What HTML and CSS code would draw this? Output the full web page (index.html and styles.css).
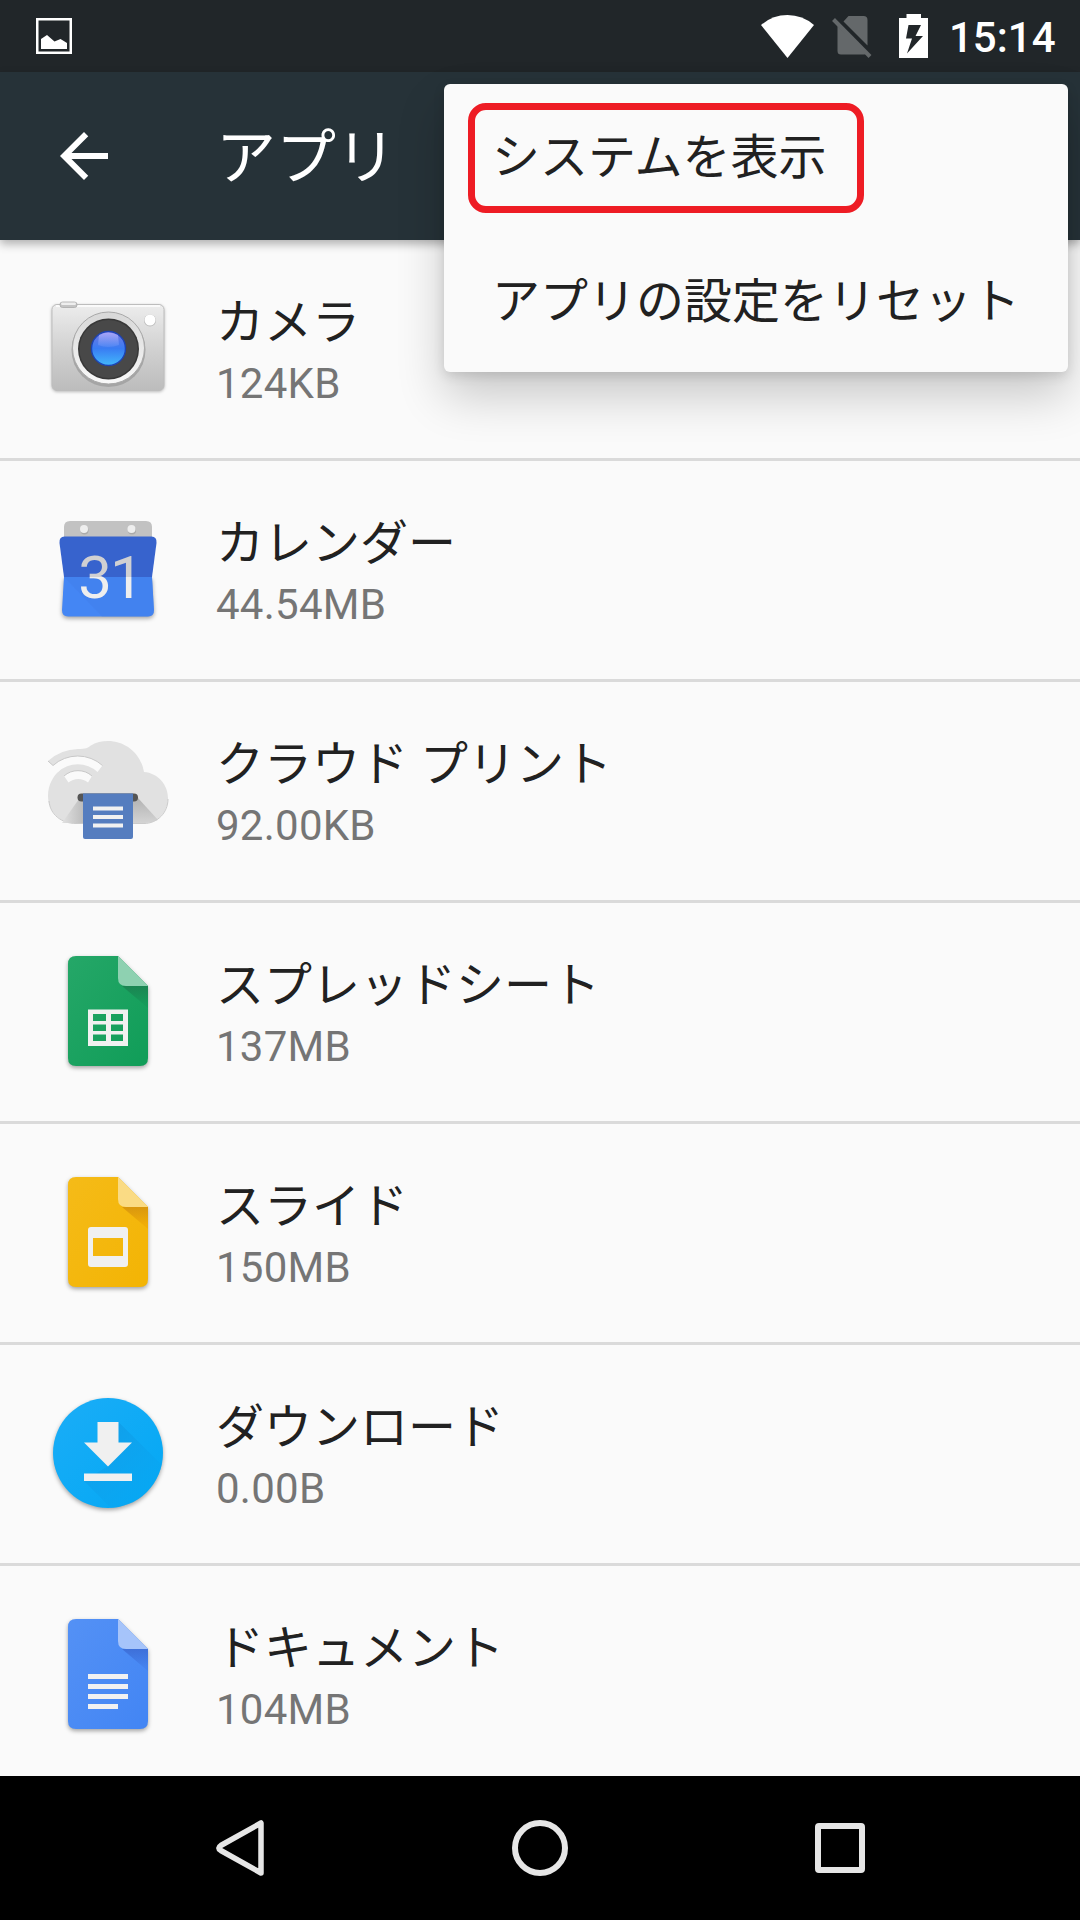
FILE: index.html
```html
<!DOCTYPE html>
<html lang="ja">
<head>
<meta charset="utf-8">
<title>アプリ</title>
<link rel="stylesheet" href="styles.css">
</head>
<body>
<div class="screen">
  <header class="status-bar">
    <svg class="status-picture" viewBox="0 0 36 36" width="36" height="36">
      <rect x="1.25" y="1.25" width="33.5" height="33.5" fill="none" stroke="#fff" stroke-width="2.5"/>
      <path d="M5 31V21L11 17L18.5 23.5L24.5 21L31 25V31Z" fill="#fff"/>
    </svg>
    <div class="status-right">
      <svg class="wifi" viewBox="0 0 53 43" width="53" height="43"><path d="M0 10Q11.500 0 26.500 0T53 10L26.500 43Z" fill="#fff"/></svg>
      <svg class="sim" viewBox="0 0 40 42" width="40" height="42">
        <path d="M11.500 5.500L16.500 0H31.500Q35.500 0 35.500 4V29.500Z M5.500 10V35Q5.500 38.500 9 38.500H32Q33.500 38.500 34.500 37.500Z" fill="#64686a"/>
        <path d="M1.500 3.500L38 40.500" stroke="#64686a" stroke-width="4"/>
      </svg>
      <svg class="battery" viewBox="0 0 29 44" width="29" height="44"><path fill="#fff" fill-rule="evenodd" d="M0 4H7.500V0H22V4H29V44H0ZM9.500 11L7 24.500H13L8 39.500L24 22H16.500L22 11Z"/></svg>
      <span class="clock">15:14</span>
    </div>
  </header>

  <div class="app-bar">
    <svg class="back" viewBox="0 0 24 24" width="72" height="72"><path fill="#fff" d="M20 11H7.830l5.590-5.590L12 4l-8 8 8 8 1.410-1.410L7.830 13H20v-2z"/></svg>
    <h1 class="title">アプリ</h1>
  </div>

  <main class="app-list">
    <div class="app-row">
      <svg class="app-icon" viewBox="0 0 120 120" width="120" height="120">
        <defs>
          <linearGradient id="camBody" x1="0" y1="0" x2="0" y2="1"><stop offset="0" stop-color="#ededed"/><stop offset=".5" stop-color="#d2d2d2"/><stop offset="1" stop-color="#bcbcbc"/></linearGradient>
          <linearGradient id="camRing" x1="0" y1="0" x2="0" y2="1"><stop offset="0" stop-color="#d8d8d8"/><stop offset="1" stop-color="#f8f8f8"/></linearGradient>
          <linearGradient id="camLens" x1="0" y1="0" x2="0" y2="1"><stop offset="0" stop-color="#7778e0"/><stop offset=".5" stop-color="#397cf3"/><stop offset="1" stop-color="#43b8fb"/></linearGradient>
          <linearGradient id="camShine" x1="0" y1="0" x2="0" y2="1"><stop offset="0" stop-color="#b9b3ff" stop-opacity=".75"/><stop offset="1" stop-color="#8ab0ff" stop-opacity=".2"/></linearGradient>
        </defs>
        <rect class="soft-light" x="4" y="15.500" width="112" height="86" rx="5" fill="url(#camBody)" stroke="#bdbdbd" stroke-width="1"/>
        <path d="M8 17H112" stroke="#fff" stroke-width="1.500"/>
        <rect x="12" y="13" width="17" height="5.500" rx="2.500" fill="#c4c4c4" stroke="#aaa" stroke-width=".8"/>
        <rect x="13" y="13.500" width="15" height="2.500" rx="1.200" fill="#eee"/>
        <circle cx="60.500" cy="61" r="37" fill="#a5a5a5"/>
        <circle cx="60.500" cy="59" r="36" fill="url(#camRing)" stroke="#a9a9a9" stroke-width="1"/>
        <circle cx="60.500" cy="59.500" r="33.500" fill="url(#camRing)"/>
        <circle cx="60.500" cy="60" r="30.500" fill="#383838"/>
        <circle cx="60.500" cy="60" r="29" fill="#484848"/>
        <circle cx="60.500" cy="59.500" r="17" fill="url(#camLens)" stroke="#1d43b2" stroke-width="1.400"/>
        <path d="M51 46Q60 41 70 46L71 56Q60 60 50 56Z" fill="url(#camShine)"/>
        <circle cx="102" cy="31.500" r="6" fill="#bbb"/>
        <circle cx="102" cy="31" r="5.500" fill="#fff"/>
      </svg>
      <div class="app-text"><div class="app-name">カメラ</div><div class="app-size">124KB</div></div>
    </div>

    <div class="app-row">
      <svg class="app-icon" viewBox="0 0 120 120" width="120" height="120">
        <defs>
          <clipPath id="calTop"><rect x="0" y="0" width="120" height="67"/></clipPath>
          <clipPath id="calBottom"><rect x="0" y="67" width="120" height="53"/></clipPath>
        </defs>
        <path d="M16 30V17Q16 11 22 11H98Q104 11 104 17V30Z" fill="#c2c2c2"/>
        <circle cx="36.500" cy="20.500" r="4" fill="#aaa"/><circle cx="84" cy="20.500" r="4" fill="#aaa"/>
        <circle cx="36" cy="19" r="4" fill="#eee"/><circle cx="83.500" cy="19" r="4" fill="#eee"/>
        <path class="soft" d="M16 67H104L106 100Q106 106.500 100 106.500H20Q14 106.500 14 100Z" fill="#4486f4"/>
        <path d="M16 67L54 106.500H100Q106 106.500 106 100L104 67Z" fill="#407ce8" opacity=".4"/>
        <path d="M16.500 26.500H103.500Q109 26.500 108.500 33L104 67H16L11.500 33Q11 26.500 16.500 26.500Z" fill="#3763cd"/>
        <text class="cal-day" x="62" y="87.500" text-anchor="middle" fill="#d0d0d2" clip-path="url(#calTop)">31</text>
        <text class="cal-day" x="62" y="87.500" text-anchor="middle" fill="#eee" clip-path="url(#calBottom)" aria-hidden="true">31</text>
      </svg>
      <div class="app-text"><div class="app-name">カレンダー</div><div class="app-size">44.54MB</div></div>
    </div>

    <div class="app-row">
      <svg class="app-icon" viewBox="0 0 120 120" width="120" height="120">
        <defs>
          <linearGradient id="slotShade" x1="0" y1="0" x2="0" y2="1"><stop offset="0" stop-color="#999"/><stop offset="1" stop-color="#ccc"/></linearGradient>
          <linearGradient id="slotLeft" x1="0" y1="0" x2="1" y2="0"><stop offset="0" stop-color="#e1e1e1"/><stop offset="1" stop-color="#bbb"/></linearGradient>
        </defs>
        <path d="M0 30A46 46 0 0 1 30 18C38 18 40 17 42 15C48 11 54 10 60 10C78 10 93 23 96 41C110 42 120 54 120 67C120 82 108 92.500 96 92.500H28C12 92.500 0 80 0 65C0 54 5 45 12 39L5 34.500Z" fill="#e1e1e1"/>
        <path d="M1 70C2 83 13 92.500 28 92.500H96C109 92.500 120 82 120 68" fill="none" stroke="#cbcbcb" stroke-width="1"/>
        <path d="M5 34.500A37 37 0 0 1 54.500 34.500L49.500 41A29 29 0 0 0 10 41Z" fill="#fafafa"/>
        <path d="M0 30L5 34.500A37 37 0 0 1 54.500 34.500" fill="none" stroke="#c8c8c8" stroke-width="1"/>
        <path d="M16 45A21 21 0 0 1 44 45L40 51.500A15 15 0 0 0 20.500 51.500Z" fill="#fafafa"/>
        <path d="M16 45A21 21 0 0 1 44 45" fill="none" stroke="#c8c8c8" stroke-width="1"/>
        <path d="M31 68L14 92H36V67Z" fill="url(#slotLeft)"/>
        <path d="M84 67H90L110 89Q103 92 97 92H84Z" fill="url(#slotShade)" opacity=".65"/>
        <rect x="29.500" y="62.500" width="60.500" height="8" rx="4" fill="#555"/>
        <path d="M35 62.500H85V106Q85 108 83 108H37Q35 108 35 106Z" fill="#557dbf"/>
        <path d="M45 77.500H75M45 86H75M45 94.500H75" stroke="#f1f1f1" stroke-width="4.200"/>
      </svg>
      <div class="app-text"><div class="app-name">クラウド プリント</div><div class="app-size">92.00KB</div></div>
    </div>

    <div class="app-row">
      <svg class="app-icon" viewBox="0 0 120 120" width="120" height="120">
        <defs>
          <linearGradient id="sheetFill" x1="0" y1="0" x2="1" y2="1"><stop offset="0" stop-color="#25a768"/><stop offset="1" stop-color="#109d58"/></linearGradient>
          <linearGradient id="sheetShade" x1="0" y1="0" x2="0" y2="1"><stop offset="0" stop-color="#1b8552"/><stop offset=".8" stop-color="#159b5a"/></linearGradient>
        </defs>
        <path class="soft" d="M28 4H70L100 34V106Q100 114 92 114H28Q20 114 20 106V12Q20 4 28 4Z" fill="url(#sheetFill)"/>
        <path d="M74 34H100V56Z" fill="url(#sheetShade)"/>
        <path d="M70 4L100 34H78Q70 34 70 26Z" fill="#8ed1b1"/>
        <path fill="#f1f1f1" fill-rule="evenodd" d="M40 57.500H80V94H40ZM45 62V69H58V62ZM63 62V69H75V62ZM45 72.500V79H58V72.500ZM63 72.500V79H75V72.500ZM45 82.500V89H58V82.500ZM63 82.500V89H75V82.500Z"/>
      </svg>
      <div class="app-text"><div class="app-name">スプレッドシート</div><div class="app-size">137MB</div></div>
    </div>

    <div class="app-row">
      <svg class="app-icon" viewBox="0 0 120 120" width="120" height="120">
        <defs>
          <linearGradient id="slideFill" x1="0" y1="0" x2="1" y2="1"><stop offset="0" stop-color="#f5bb18"/><stop offset="1" stop-color="#f3b404"/></linearGradient>
          <linearGradient id="slideShade" x1="0" y1="0" x2="0" y2="1"><stop offset="0" stop-color="#d9970f"/><stop offset=".8" stop-color="#f0ad07"/></linearGradient>
        </defs>
        <path class="soft" d="M28 4H70L100 34V106Q100 114 92 114H28Q20 114 20 106V12Q20 4 28 4Z" fill="url(#slideFill)"/>
        <path d="M74 34H100V56Z" fill="url(#slideShade)"/>
        <path d="M70 4L100 34H78Q70 34 70 26Z" fill="#fadb84"/>
        <path fill="#f0f0f0" fill-rule="evenodd" d="M43 54H77Q80 54 80 57V91Q80 94 77 94H43Q40 94 40 91V57Q40 54 43 54ZM45 65V83H75V65Z"/>
      </svg>
      <div class="app-text"><div class="app-name">スライド</div><div class="app-size">150MB</div></div>
    </div>

    <div class="app-row">
      <svg class="app-icon" viewBox="0 0 120 120" width="120" height="120">
        <defs>
          <linearGradient id="dlFill" x1="0" y1="0" x2="1" y2="1"><stop offset="0" stop-color="#1badf7"/><stop offset="1" stop-color="#03a8f4"/></linearGradient>
          <linearGradient id="dlShade" x1="0" y1="0" x2="1" y2="1"><stop offset="0" stop-color="#1394de"/><stop offset=".8" stop-color="#08a4f0" stop-opacity=".3"/></linearGradient>
          <clipPath id="dlClip"><circle cx="60" cy="59" r="55"/></clipPath>
        </defs>
        <circle class="soft" cx="60" cy="59" r="55" fill="url(#dlFill)"/>
        <path d="M70.500 28L125 82V120H69L36 87L60 72Z" fill="url(#dlShade)" opacity=".7" clip-path="url(#dlClip)"/>
        <path d="M49.500 28H70.500V48.500H84L60 72.500L36 48.500H49.500ZM36 79.500H84V87H36Z" fill="#f0f0f0"/>
      </svg>
      <div class="app-text"><div class="app-name">ダウンロード</div><div class="app-size">0.00B</div></div>
    </div>

    <div class="app-row">
      <svg class="app-icon" viewBox="0 0 120 120" width="120" height="120">
        <defs>
          <linearGradient id="docFill" x1="0" y1="0" x2="1" y2="1"><stop offset="0" stop-color="#5491f5"/><stop offset="1" stop-color="#4285f4"/></linearGradient>
          <linearGradient id="docShade" x1="0" y1="0" x2="0" y2="1"><stop offset="0" stop-color="#3e70d9"/><stop offset=".8" stop-color="#4482ee"/></linearGradient>
        </defs>
        <path class="soft" d="M28 4H70L100 34V106Q100 114 92 114H28Q20 114 20 106V12Q20 4 28 4Z" fill="url(#docFill)"/>
        <path d="M74 34H100V56Z" fill="url(#docShade)"/>
        <path d="M70 4L100 34H78Q70 34 70 26Z" fill="#a6c4fa"/>
        <path d="M40 61.500H80M40 71.500H80M40 81.500H80M40 91.500H70" stroke="#f1f1f1" stroke-width="5"/>
      </svg>
      <div class="app-text"><div class="app-name">ドキュメント</div><div class="app-size">104MB</div></div>
    </div>
  </main>

  <nav class="nav-bar">
    <svg viewBox="0 0 56 56" width="56" height="56"><path d="M45 3V53L4.800 30.500Q.8 28 4.800 25.500Z" transform="translate(4 0)" fill="none" stroke="#e6e6e6" stroke-width="5.500" stroke-linejoin="round"/></svg>
    <svg viewBox="0 0 56 56" width="56" height="56"><circle cx="28" cy="28" r="25" fill="none" stroke="#e6e6e6" stroke-width="6"/></svg>
    <svg viewBox="0 0 56 56" width="56" height="56"><rect x="6" y="6" width="44" height="44" rx="1" fill="none" stroke="#e6e6e6" stroke-width="6" stroke-linejoin="round"/></svg>
  </nav>

  <div class="menu">
    <div class="menu-item">システムを表示</div>
    <div class="menu-item">アプリの設定をリセット</div>
    <div class="highlight"></div>
  </div>
</div>
</body>
</html>
```
FILE: styles.css
```css
* { box-sizing: border-box; }

body {
  margin: 0;
  background: #000;
  font-family: Roboto, "Noto Sans CJK JP", sans-serif;
}

svg { display: block; flex: none; }

.screen {
  position: relative;
  width: 1080px;
  height: 1920px;
  display: flex;
  flex-direction: column;
  overflow: hidden;
  background: #fafafa;
}

.status-bar {
  flex: none;
  height: 72px;
  padding: 0 24px 0 36px;
  display: flex;
  align-items: center;
  justify-content: space-between;
  background: #212629;
}

.status-right { display: flex; align-items: center; }
.sim { margin-left: 18px; margin-top: 2px; }
.battery { margin-left: 27px; }

.clock {
  width: 107px;
  margin-left: 21px;
  margin-top: 3px;
  color: #fff;
  font-size: 42px;
  font-weight: 500;
  line-height: 48px;
  white-space: nowrap;
}

.app-bar {
  flex: none;
  height: 168px;
  padding: 0 48px;
  display: flex;
  align-items: center;
  gap: 96px;
  background: #263238;
  box-shadow: 0 4px 9px rgba(0, 0, 0, .3);
  z-index: 1;
}

.title {
  margin: 0;
  padding-top: 6px;
  color: #fff;
  font-size: 60px;
  font-weight: 400;
  line-height: 80px;
}

.app-list {
  flex: 1;
  min-height: 0;
  overflow: hidden;
  display: flex;
  flex-direction: column;
}

.app-row {
  flex: none;
  height: 221px;
  padding: 0 48px;
  display: flex;
  align-items: center;
  gap: 48px;
  border-bottom: 3px solid #dadada;
}

.app-icon { overflow: visible; }
.soft { filter: drop-shadow(0 2px 2px rgba(0, 0, 0, .35)); }
.soft-light { filter: drop-shadow(0 1px 1.5px rgba(0, 0, 0, .25)); }
.cal-day { font: 400 60px Roboto, sans-serif; letter-spacing: -2px; }

.app-text {
  padding-top: 5px;
  display: flex;
  flex-direction: column;
}

.app-name {
  color: #212121;
  font-size: 48px;
  line-height: 64px;
}

.app-size {
  color: #757575;
  font-size: 42px;
  line-height: 57px;
  letter-spacing: .25px;
}

.nav-bar {
  flex: none;
  height: 144px;
  padding: 0 212px;
  display: flex;
  align-items: center;
  justify-content: space-between;
  background: #000;
}

/* Overflow menu floating above the toolbar and list */
.menu {
  position: absolute;
  top: 84px;
  left: 444px;
  width: 624px;
  z-index: 2;
  border-radius: 6px;
  background: #fafafa;
  box-shadow: 0 24px 48px rgba(0, 0, 0, .2), 0 4px 12px rgba(0, 0, 0, .12);
}

.menu-item {
  height: 144px;
  padding: 2px 48px 0;
  color: #212121;
  font-size: 48px;
  line-height: 144px;
  white-space: nowrap;
}

.highlight {
  position: absolute;
  top: 19px;
  left: 24px;
  width: 396px;
  height: 110px;
  border: 7px solid #ee1c24;
  border-radius: 18px;
}
```
